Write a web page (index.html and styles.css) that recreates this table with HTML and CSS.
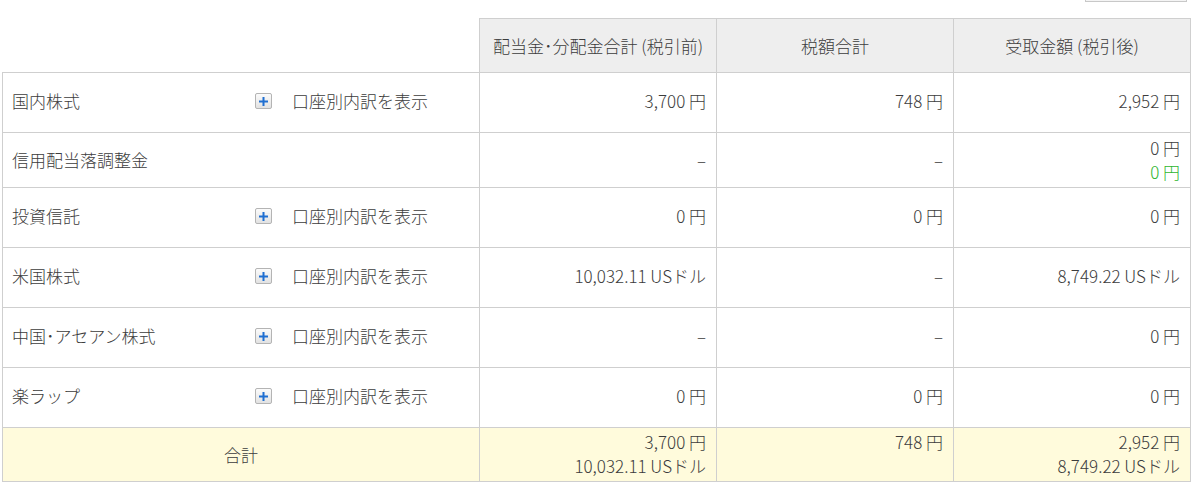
FILE: index.html
```html
<!DOCTYPE html>
<html lang="ja">
<head>
<meta charset="utf-8">
<link rel="stylesheet" href="styles.css">
</head>
<body>
<div class="page">
  <div class="toolbar"><span class="cut-btn"></span></div>
  <table class="summary">
    <colgroup>
      <col class="c-name">
      <col class="c-num">
      <col class="c-num">
      <col class="c-num">
    </colgroup>
    <thead>
      <tr class="r-head">
        <th class="blank"></th>
        <th>配当金･分配金合計 (税引前)</th>
        <th>税額合計</th>
        <th>受取金額 (税引後)</th>
      </tr>
    </thead>
    <tbody>
      <tr class="r-std">
        <td class="name"><div class="name-wrap"><span class="label">国内株式</span><span class="plus"><svg width="9" height="9" viewBox="0 0 9 9"><path d="M3.5 0h2v3.5H9v2H5.5V9h-2V5.5H0v-2h3.5z" fill="#1f6fd1"/></svg></span><span class="detail">口座別内訳を表示</span></div></td>
        <td class="num">3,700 円</td>
        <td class="num">748 円</td>
        <td class="num">2,952 円</td>
      </tr>
      <tr class="r-short">
        <td class="name"><div class="name-wrap"><span class="label">信用配当落調整金</span></div></td>
        <td class="num">–</td>
        <td class="num">–</td>
        <td class="num"><div>0 円</div><div class="green">0 円</div></td>
      </tr>
      <tr class="r-std">
        <td class="name"><div class="name-wrap"><span class="label">投資信託</span><span class="plus"><svg width="9" height="9" viewBox="0 0 9 9"><path d="M3.5 0h2v3.5H9v2H5.5V9h-2V5.5H0v-2h3.5z" fill="#1f6fd1"/></svg></span><span class="detail">口座別内訳を表示</span></div></td>
        <td class="num">0 円</td>
        <td class="num">0 円</td>
        <td class="num">0 円</td>
      </tr>
      <tr class="r-std">
        <td class="name"><div class="name-wrap"><span class="label">米国株式</span><span class="plus"><svg width="9" height="9" viewBox="0 0 9 9"><path d="M3.5 0h2v3.5H9v2H5.5V9h-2V5.5H0v-2h3.5z" fill="#1f6fd1"/></svg></span><span class="detail">口座別内訳を表示</span></div></td>
        <td class="num">10,032.11 USドル</td>
        <td class="num">–</td>
        <td class="num">8,749.22 USドル</td>
      </tr>
      <tr class="r-std">
        <td class="name"><div class="name-wrap"><span class="label">中国･アセアン株式</span><span class="plus"><svg width="9" height="9" viewBox="0 0 9 9"><path d="M3.5 0h2v3.5H9v2H5.5V9h-2V5.5H0v-2h3.5z" fill="#1f6fd1"/></svg></span><span class="detail">口座別内訳を表示</span></div></td>
        <td class="num">–</td>
        <td class="num">–</td>
        <td class="num">0 円</td>
      </tr>
      <tr class="r-std">
        <td class="name"><div class="name-wrap"><span class="label">楽ラップ</span><span class="plus"><svg width="9" height="9" viewBox="0 0 9 9"><path d="M3.5 0h2v3.5H9v2H5.5V9h-2V5.5H0v-2h3.5z" fill="#1f6fd1"/></svg></span><span class="detail">口座別内訳を表示</span></div></td>
        <td class="num">0 円</td>
        <td class="num">0 円</td>
        <td class="num">0 円</td>
      </tr>
      <tr class="r-total">
        <td class="total-label">合計</td>
        <td class="num top"><div>3,700 円</div><div>10,032.11 USドル</div></td>
        <td class="num top">748 円</td>
        <td class="num top"><div>2,952 円</div><div>8,749.22 USドル</div></td>
      </tr>
    </tbody>
  </table>
</div>
</body>
</html>
```

FILE: styles.css
```css
html, body {
  margin: 0;
  padding: 0;
  background: #ffffff;
}

body {
  font-family: "Noto Sans CJK JP", "Noto Sans", sans-serif;
  font-size: 17px;
  font-weight: 300;
  color: #3c3c3c;
}

.page {
  padding-left: 2px;
  width: 1189px;
}

.toolbar {
  display: flex;
  justify-content: flex-end;
  height: 2px;
  padding-right: 4px;
  margin-bottom: 16px;
}

.cut-btn {
  width: 100px;
  height: 1px;
  border: 1px solid #c8c8c8;
  border-top: none;
  background: #f4f4f4;
}

.summary {
  border-collapse: collapse;
  table-layout: fixed;
  width: 1189px;
}

.c-name { width: 477px; }
.c-num { width: 237px; }

.summary th,
.summary td {
  border: 1px solid #cfcfcf;
  padding: 0 10px;
  line-height: 24px;
  font-weight: 300;
}

.summary th {
  background: #eeeeee;
  text-align: center;
  height: 53px;
}

.summary th.blank {
  background: transparent;
  border-top: none;
  border-left: none;
}

.r-std td {
  height: 56px;
  padding-bottom: 3px;
}

.r-short td { height: 54px; }

.r-total td {
  height: 51px;
  background: #fffbdc;
}

.summary td.name {
  padding-left: 9px;
}

.name-wrap {
  display: flex;
  align-items: center;
}

.label {
  width: 243px;
  flex: none;
}

.plus {
  width: 15px;
  height: 14px;
  border: 1px solid #b4b4b4;
  border-radius: 2px;
  background: linear-gradient(#fbfbfb, #e2e2e2);
  display: flex;
  align-items: center;
  justify-content: center;
  margin-right: 20px;
}

.plus svg { display: block; }

.num {
  text-align: right;
  vertical-align: middle;
}

.summary td.num.top {
  vertical-align: top;
  padding-top: 2px;
}

.green { color: #2fb52f; }

.total-label {
  text-align: center;
}
```
